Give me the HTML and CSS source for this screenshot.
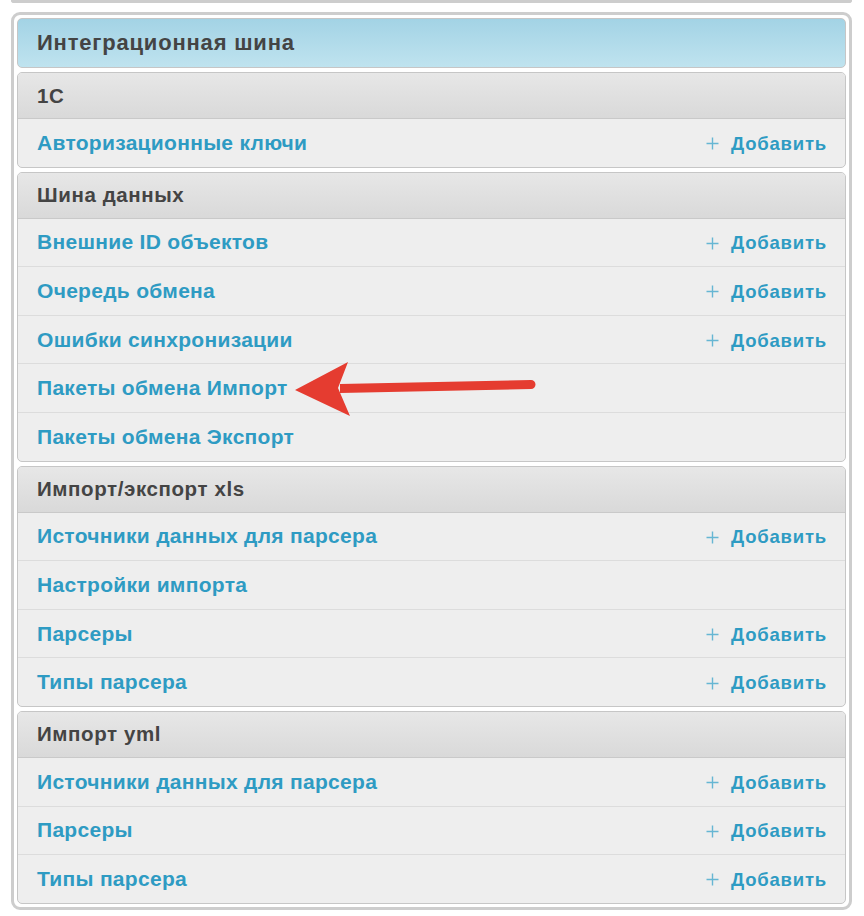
FILE: index.html
```html
<!DOCTYPE html>
<html lang="ru">
<head>
<meta charset="utf-8">
<title>Интеграционная шина</title>
<link rel="stylesheet" href="styles.css">
</head>
<body>
<div class="prev-frame"></div>
<div class="frame">
  <div class="module module-main">
    <div class="caption">Интеграционная шина</div>
  </div>

  <div class="module">
    <div class="header">1С</div>
    <div class="row"><a class="link" href="#">Авторизационные ключи</a><a class="add" href="#"><svg class="plus" width="13" height="13" viewBox="0 0 13 13"><path d="M6.5 0.5V12.5M0.5 6.5H12.5"/></svg>Добавить</a></div>
  </div>

  <div class="module">
    <div class="header">Шина данных</div>
    <div class="row"><a class="link" href="#">Внешние ID объектов</a><a class="add" href="#"><svg class="plus" width="13" height="13" viewBox="0 0 13 13"><path d="M6.5 0.5V12.5M0.5 6.5H12.5"/></svg>Добавить</a></div>
    <div class="row"><a class="link" href="#">Очередь обмена</a><a class="add" href="#"><svg class="plus" width="13" height="13" viewBox="0 0 13 13"><path d="M6.5 0.5V12.5M0.5 6.5H12.5"/></svg>Добавить</a></div>
    <div class="row"><a class="link" href="#">Ошибки синхронизации</a><a class="add" href="#"><svg class="plus" width="13" height="13" viewBox="0 0 13 13"><path d="M6.5 0.5V12.5M0.5 6.5H12.5"/></svg>Добавить</a></div>
    <div class="row"><a class="link" href="#">Пакеты обмена Импорт</a></div>
    <div class="row"><a class="link" href="#">Пакеты обмена Экспорт</a></div>
  </div>

  <div class="module">
    <div class="header">Импорт/экспорт xls</div>
    <div class="row"><a class="link" href="#">Источники данных для парсера</a><a class="add" href="#"><svg class="plus" width="13" height="13" viewBox="0 0 13 13"><path d="M6.5 0.5V12.5M0.5 6.5H12.5"/></svg>Добавить</a></div>
    <div class="row"><a class="link" href="#">Настройки импорта</a></div>
    <div class="row"><a class="link" href="#">Парсеры</a><a class="add" href="#"><svg class="plus" width="13" height="13" viewBox="0 0 13 13"><path d="M6.5 0.5V12.5M0.5 6.5H12.5"/></svg>Добавить</a></div>
    <div class="row"><a class="link" href="#">Типы парсера</a><a class="add" href="#"><svg class="plus" width="13" height="13" viewBox="0 0 13 13"><path d="M6.5 0.5V12.5M0.5 6.5H12.5"/></svg>Добавить</a></div>
  </div>

  <div class="module">
    <div class="header">Импорт yml</div>
    <div class="row"><a class="link" href="#">Источники данных для парсера</a><a class="add" href="#"><svg class="plus" width="13" height="13" viewBox="0 0 13 13"><path d="M6.5 0.5V12.5M0.5 6.5H12.5"/></svg>Добавить</a></div>
    <div class="row"><a class="link" href="#">Парсеры</a><a class="add" href="#"><svg class="plus" width="13" height="13" viewBox="0 0 13 13"><path d="M6.5 0.5V12.5M0.5 6.5H12.5"/></svg>Добавить</a></div>
    <div class="row"><a class="link" href="#">Типы парсера</a><a class="add" href="#"><svg class="plus" width="13" height="13" viewBox="0 0 13 13"><path d="M6.5 0.5V12.5M0.5 6.5H12.5"/></svg>Добавить</a></div>
  </div>
</div>

<svg class="arrow" width="864" height="916" viewBox="0 0 864 916">
  <path d="M340 384 L531 380 A4.5 4.5 0 0 1 531 389 L340 393 Z" fill="#e53c30"/>
  <path d="M295 390 L348 362 L338 388 L350 416 Z" fill="#e53c30"/>
</svg>
</body>
</html>
```

FILE: styles.css
```css
html, body {
  margin: 0;
  padding: 0;
  background: #ffffff;
}

body {
  font-family: "Liberation Sans", Arial, sans-serif;
  width: 864px;
  height: 916px;
  overflow: hidden;
  position: relative;
}

.prev-frame {
  margin-left: 11px;
  width: 835px;
  height: 0;
  border: 3px solid #cdcdcd;
  border-top: none;
  border-radius: 0 0 9px 9px;
}

.frame {
  margin: 9px 0 0 11px;
  width: 829px;
  border: 3px solid #cdcdcd;
  border-radius: 9px;
  padding: 3px;
  background: #ffffff;
}

.module {
  border: 1px solid #c6c6c6;
  border-radius: 5px;
  background: #eeeeee;
  overflow: hidden;
  margin-bottom: 4px;
}

.module:last-child {
  margin-bottom: 0;
}

.module-main {
  background: linear-gradient(#a3d3e5, #bfe3ef);
}

.caption {
  height: 48px;
  display: flex;
  align-items: center;
  padding: 0 19px;
  font-size: 22px;
  letter-spacing: 0.8px;
  font-weight: bold;
  color: #444444;
}

.header {
  height: 45px;
  display: flex;
  align-items: center;
  padding: 0 19px;
  font-size: 20.5px;
  letter-spacing: 0.6px;
  font-weight: bold;
  color: #444444;
  background: linear-gradient(#e7e7e7, #d9d9d9);
  border-bottom: 1px solid #c9c9c9;
}

.row {
  height: 47.6px;
  display: flex;
  align-items: center;
  justify-content: space-between;
  padding: 0 18px 0 19px;
  border-top: 1px solid #dcdcdc;
}

.header + .row {
  border-top: none;
}

.link {
  font-size: 21px;
  letter-spacing: 0.3px;
  font-weight: bold;
  color: #2e9bc3;
  text-decoration: none;
}

.add {
  display: flex;
  align-items: center;
  padding-top: 2px;
  font-size: 18.5px;
  letter-spacing: 0.8px;
  font-weight: bold;
  color: #2e9bc3;
  text-decoration: none;
}

.plus {
  margin-right: 12px;
  stroke: #66b6d3;
  stroke-width: 1.4;
  fill: none;
}

.arrow {
  position: absolute;
  left: 0;
  top: 0;
  pointer-events: none;
}
```
